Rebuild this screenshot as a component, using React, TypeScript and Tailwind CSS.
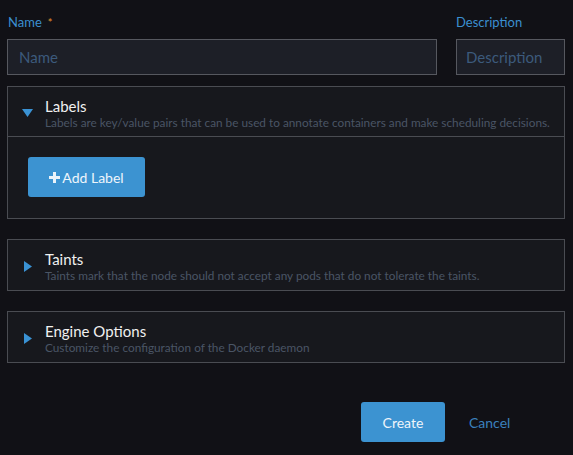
import React from "react";

const font = { fontFamily: "Lato, 'Open Sans', sans-serif" };

function Section({ title, desc, open }: { title: string; desc: string; open?: boolean }) {
  return (
    <div className="flex items-start">
      <div className="w-[37px] flex justify-center pt-[18px] shrink-0">
        {open ? (
          <svg width="11" height="8" viewBox="0 0 11 8" className="ml-[2px] mt-[4px]">
            <polygon points="0,0 11,0 5.5,8" fill="#3a92d4" />
          </svg>
        ) : (
          <svg width="8" height="11" viewBox="0 0 8 11" className="ml-[3px] mt-[3px]">
            <polygon points="0,0 8,5.5 0,11" fill="#3a92d4" />
          </svg>
        )}
      </div>
      <div className="pt-[10px]">
        <div className="text-[15px] leading-[19px] text-[#f0f0f0]">{title}</div>
        <div className="text-[11.8px] leading-[14px] text-[#4a5565]">{desc}</div>
      </div>
    </div>
  );
}

export default function App() {
  return (
    <div style={font} className="w-[573px] h-[455px] bg-[#111116] px-[7px] pt-[14px]">
      <div className="flex gap-[19px] pr-[1px]">
        <div className="flex-1">
          <div className="text-[13px] leading-[17px] text-[#3b8fd0] pl-[1px] h-[25px]">
            Name<span className="text-[#e0922e] text-[11px] align-top ml-[6px]">*</span>
          </div>
          <div className="h-[36px] border border-[#56585f] bg-[#1d1f27] flex items-center pl-[11px] text-[15px] text-[#3c5a7c]">
            Name
          </div>
        </div>
        <div className="w-[109px]">
          <div className="text-[13px] leading-[17px] text-[#3b8fd0] h-[25px]">Description</div>
          <div className="h-[36px] border border-[#56585f] bg-[#1d1f27] flex items-center pl-[9px] text-[15px] text-[#3c5a7c]">
            Description
          </div>
        </div>
      </div>

      <div className="mt-[11px] mr-[1px] border border-[#4a4c52] bg-[#17181d]">
        <div className="h-[50px] border-b border-[#4a4c52]">
          <Section
            open
            title="Labels"
            desc="Labels are key/value pairs that can be used to annotate containers and make scheduling decisions."
          />
        </div>
        <div className="h-[81px] pl-[20px] pt-[20px]">
          <button className="w-[117px] h-[40px] rounded-[3px] bg-[#3c93d1] text-white text-[14px] flex items-center justify-center gap-[2px]">
            <svg width="11" height="11" viewBox="0 0 11 11">
              <rect x="4" y="0" width="3" height="11" fill="#eaf3fa" />
              <rect x="0" y="4" width="11" height="3" fill="#eaf3fa" />
            </svg>
            <span className="text-[#eef5fb]">Add Label</span>
          </button>
        </div>
      </div>

      <div className="mt-[20px] mr-[1px] h-[52px] border border-[#4a4c52] bg-[#17181d]">
        <Section
          title="Taints"
          desc="Taints mark that the node should not accept any pods that do not tolerate the taints."
        />
      </div>

      <div className="mt-[20px] mr-[1px] h-[52px] border border-[#4a4c52] bg-[#17181d]">
        <Section title="Engine Options" desc="Customize the configuration of the Docker daemon" />
      </div>

      <div className="flex items-center mt-[39px] pl-[354px]">
        <button className="w-[84px] h-[40px] rounded-[3px] bg-[#3c93d1] text-[#eef5fb] text-[14px]">Create</button>
        <span className="ml-[24px] text-[14px] text-[#3b80bd]">Cancel</span>
      </div>
    </div>
  );
}
